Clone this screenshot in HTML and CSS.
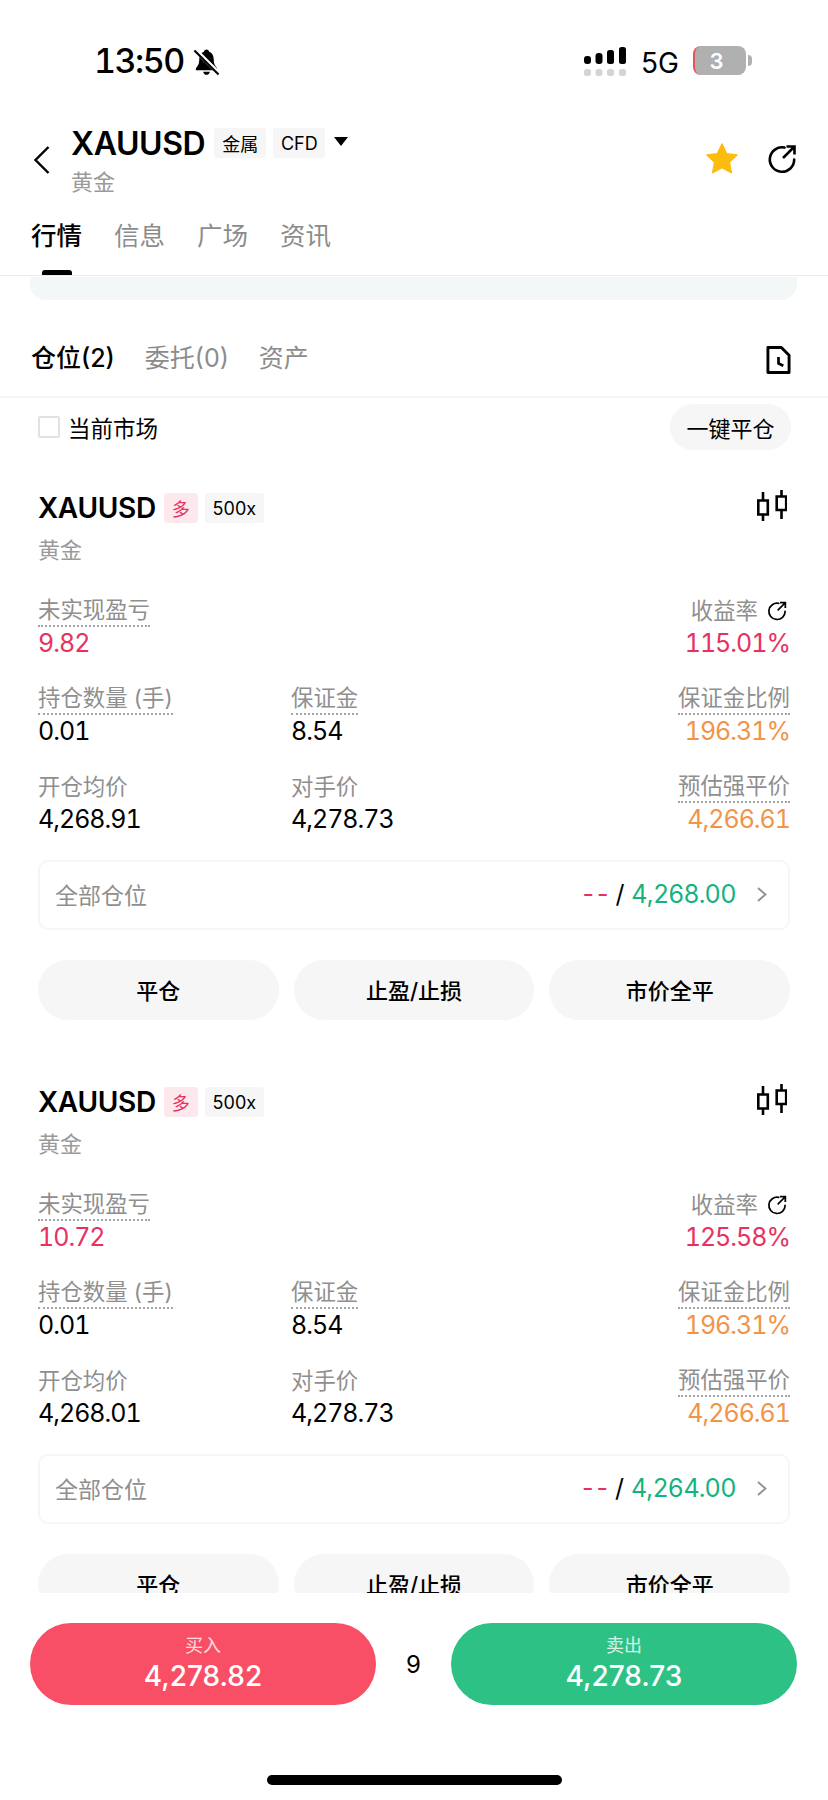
FILE: index.html
```html
<!DOCTYPE html>
<html lang="zh-CN">
<head>
    <meta charset="UTF-8">
    <meta name="viewport" content="width=device-width, initial-scale=1.0">
    <title>XAUUSD 黄金</title>
    <link rel="stylesheet" href="styles.css">
</head>
<body>
    <svg class="defs" width="0" height="0" aria-hidden="true">
        <symbol id="share" viewBox="0 0 30 30">
            <path d="M17.5 3.6A12.2 12.2 0 1 0 27.2 15.5" fill="none" stroke="currentColor" stroke-width="2.6" stroke-linecap="round"/>
            <path d="M16 14 27 3M19.5 2.5h8v8" fill="none" stroke="currentColor" stroke-width="2.6"/>
        </symbol>
        <symbol id="candle" viewBox="0 0 30 32">
            <path d="M6 2v8M6 25v6M24.500 0v6M24.500 20v9" stroke="currentColor" stroke-width="2.600"/>
            <path d="M1.300 10.500h9.500v14H1.300zM19.700 6.500h9.500v13.500h-9.500z" fill="none" stroke="currentColor" stroke-width="2.600"/>
        </symbol>
        <symbol id="chevron" viewBox="0 0 10 15">
            <path d="M1 1l7.500 6.500L1 14" fill="none" stroke="currentColor" stroke-width="1.800"/>
        </symbol>
    </svg>

    <div class="status-bar">
        <div class="status-left">
            <span class="clock">13:50</span>
            <svg class="bell" viewBox="0 0 28 28" width="27" height="28">
                <path d="M14 1c-1.500 0-2.500 1-2.700 2.300C7.800 4.500 6.500 8 6.500 11.500c0 4-1 6.500-3.500 9v2h22v-2c-2.500-2.500-3.500-5-3.500-9C21.500 8 20.200 4.500 16.700 3.300 16.500 2 15.500 1 14 1zM10.500 24c.4 2 1.800 3.300 3.500 3.300s3.100-1.300 3.500-3.300z" fill="#000"/>
                <path d="M3 2l24 24" stroke="#fff" stroke-width="4.500"/>
                <path d="M1.500 2l25 25" stroke="#000" stroke-width="2.200"/>
            </svg>
        </div>
        <div class="status-right">
            <svg class="signal" viewBox="0 0 42 29" width="42" height="29">
                <rect x="0" y="9" width="7" height="8" rx="3" fill="#000"/>
                <rect x="11.500" y="6" width="7" height="11" rx="3" fill="#000"/>
                <rect x="23" y="3" width="7" height="14" rx="2.500" fill="#000"/>
                <rect x="35" y="0" width="7" height="17" rx="2.500" fill="#000"/>
                <rect x="0" y="22" width="7" height="7" rx="2.500" fill="#d4d4d4"/>
                <rect x="11.500" y="22" width="7" height="7" rx="2.500" fill="#d4d4d4"/>
                <rect x="23" y="22" width="7" height="7" rx="2.500" fill="#d4d4d4"/>
                <rect x="35" y="22" width="7" height="7" rx="2.500" fill="#d4d4d4"/>
            </svg>
            <span class="network">5G</span>
            <div class="battery"><span class="battery-level">3</span></div>
        </div>
    </div>

    <header class="nav">
        <svg class="back" viewBox="0 0 18 30" width="18" height="30">
            <path d="M15.500 2 2.500 15l13 13" fill="none" stroke="#000" stroke-width="2.400"/>
        </svg>
        <div class="nav-title">
            <div class="nav-name">
                <span class="symbol-large">XAUUSD</span>
                <span class="tag tag-nav">金属</span>
                <span class="tag tag-nav">CFD</span>
                <span class="caret"></span>
            </div>
            <div class="nav-sub">黄金</div>
        </div>
        <div class="nav-actions">
            <svg class="star" viewBox="0 0 32 31" width="32" height="31">
                <path d="M16 1l4.600 9.700 10.400 1.300-7.700 7.200 2 10.500L16 24.500 6.700 29.700l2-10.500L1 12l10.400-1.300z" fill="#fcbc0d" stroke="#fcbc0d" stroke-width="1.500" stroke-linejoin="round"/>
            </svg>
            <svg class="share-large"><use href="#share"/></svg>
        </div>
    </header>

    <nav class="main-tabs">
        <a class="main-tab active">行情</a>
        <a class="main-tab">信息</a>
        <a class="main-tab">广场</a>
        <a class="main-tab">资讯</a>
    </nav>

    <main class="content">
        <div class="strip"></div>

        <div class="sub-tabs">
            <a class="sub-tab active">仓位(2)</a>
            <a class="sub-tab">委托(0)</a>
            <a class="sub-tab">资产</a>
            <svg class="history" viewBox="0 0 26 30" width="25" height="30">
                <path d="M2 2h14l8 8v18H2z" fill="none" stroke="#000" stroke-width="3" stroke-linejoin="round"/>
                <path d="M13 12v6.500l5 2.500" fill="none" stroke="#000" stroke-width="2.800"/>
            </svg>
        </div>

        <div class="filter-row">
            <label class="market-check"><span class="checkbox"></span>当前市场</label>
            <button class="close-all">一键平仓</button>
        </div>

        <section class="position">
            <div class="position-head">
                <div>
                    <div class="position-name">
                        <span class="symbol">XAUUSD</span>
                        <span class="tag tag-long">多</span>
                        <span class="tag tag-lever">500x</span>
                    </div>
                    <div class="position-sub">黄金</div>
                </div>
                <svg class="candle"><use href="#candle"/></svg>
            </div>
            <div class="stats">
                <div class="stat">
                    <span class="label dotted">未实现盈亏</span>
                    <span class="value red">9.82</span>
                </div>
                <div class="stat"></div>
                <div class="stat stat-right">
                    <span class="label">收益率<svg class="share-small"><use href="#share"/></svg></span>
                    <span class="value red">115.01%</span>
                </div>
                <div class="stat">
                    <span class="label dotted">持仓数量 (手)</span>
                    <span class="value">0.01</span>
                </div>
                <div class="stat">
                    <span class="label dotted">保证金</span>
                    <span class="value">8.54</span>
                </div>
                <div class="stat stat-right">
                    <span class="label dotted">保证金比例</span>
                    <span class="value orange">196.31%</span>
                </div>
                <div class="stat">
                    <span class="label">开仓均价</span>
                    <span class="value">4,268.91</span>
                </div>
                <div class="stat">
                    <span class="label">对手价</span>
                    <span class="value">4,278.73</span>
                </div>
                <div class="stat stat-right">
                    <span class="label dotted">预估强平价</span>
                    <span class="value orange">4,266.61</span>
                </div>
            </div>
            <div class="all-positions">
                <span class="all-label">全部仓位</span>
                <div class="all-values">
                    <span class="red dashes">--</span>
                    <span class="slash">/</span>
                    <span class="green">4,268.00</span>
                    <svg class="chevron"><use href="#chevron"/></svg>
                </div>
            </div>
            <div class="actions">
                <button class="action">平仓</button>
                <button class="action">止盈/止损</button>
                <button class="action">市价全平</button>
            </div>
        </section>

        <section class="position">
            <div class="position-head">
                <div>
                    <div class="position-name">
                        <span class="symbol">XAUUSD</span>
                        <span class="tag tag-long">多</span>
                        <span class="tag tag-lever">500x</span>
                    </div>
                    <div class="position-sub">黄金</div>
                </div>
                <svg class="candle"><use href="#candle"/></svg>
            </div>
            <div class="stats">
                <div class="stat">
                    <span class="label dotted">未实现盈亏</span>
                    <span class="value red">10.72</span>
                </div>
                <div class="stat"></div>
                <div class="stat stat-right">
                    <span class="label">收益率<svg class="share-small"><use href="#share"/></svg></span>
                    <span class="value red">125.58%</span>
                </div>
                <div class="stat">
                    <span class="label dotted">持仓数量 (手)</span>
                    <span class="value">0.01</span>
                </div>
                <div class="stat">
                    <span class="label dotted">保证金</span>
                    <span class="value">8.54</span>
                </div>
                <div class="stat stat-right">
                    <span class="label dotted">保证金比例</span>
                    <span class="value orange">196.31%</span>
                </div>
                <div class="stat">
                    <span class="label">开仓均价</span>
                    <span class="value">4,268.01</span>
                </div>
                <div class="stat">
                    <span class="label">对手价</span>
                    <span class="value">4,278.73</span>
                </div>
                <div class="stat stat-right">
                    <span class="label dotted">预估强平价</span>
                    <span class="value orange">4,266.61</span>
                </div>
            </div>
            <div class="all-positions">
                <span class="all-label">全部仓位</span>
                <div class="all-values">
                    <span class="red dashes">--</span>
                    <span class="slash">/</span>
                    <span class="green">4,264.00</span>
                    <svg class="chevron"><use href="#chevron"/></svg>
                </div>
            </div>
            <div class="actions">
                <button class="action">平仓</button>
                <button class="action">止盈/止损</button>
                <button class="action">市价全平</button>
            </div>
        </section>
    </main>

    <footer class="trade-bar">
        <div class="trade-row">
            <button class="trade buy"><span class="trade-label">买入</span><span class="trade-price">4,278.82</span></button>
            <span class="spread">9</span>
            <button class="trade sell"><span class="trade-label">卖出</span><span class="trade-price">4,278.73</span></button>
        </div>
        <div class="home-indicator"></div>
    </footer>
</body>
</html>
```

FILE: styles.css
```css
* {
    box-sizing: border-box;
}
html, body {
    margin: 0;
    padding: 0;
}
body {
    width: 828px;
    height: 1800px;
    overflow: hidden;
    display: flex;
    flex-direction: column;
    font-family: Inter, "Noto Sans CJK SC", sans-serif;
    background-color: #fff;
    color: #000;
}
button {
    font-family: inherit;
    border: none;
    padding: 0;
}
.defs {
    position: absolute;
}
.red {
    color: #e8315f;
}
.orange {
    color: #f29448;
}
.green {
    color: #14b37d;
}

/* status bar */
.status-bar {
    height: 110px;
    flex: none;
    display: flex;
    justify-content: space-between;
    padding: 46px 0 0 94px;
}
.status-left {
    display: flex;
    align-items: flex-start;
    height: 30px;
    gap: 9px;
}
.clock {
    font-size: 34px;
    font-weight: 500;
    font-variant-numeric: tabular-nums;
    letter-spacing: -1.5px;
    line-height: 30px;
}
.bell {
    margin-top: 2px;
}
.status-right {
    display: flex;
    align-items: flex-start;
    padding-right: 82px;
}
.signal {
    flex: none;
    margin-top: 1px;
}
.network {
    font-size: 28px;
    line-height: 30px;
    margin: 2px 14px 0 15px;
}
.battery {
    position: relative;
    width: 53px;
    height: 29px;
    background-color: #b0b0b0;
    border-left: 2px solid #e0555a;
    border-radius: 8px;
    display: flex;
    align-items: center;
    justify-content: center;
}
.battery::after {
    content: "";
    position: absolute;
    right: -6px;
    top: 9px;
    width: 4px;
    height: 11px;
    border-radius: 0 4px 4px 0;
    background-color: #b0b0b0;
}
.battery-level {
    color: #fff;
    font-size: 22px;
    font-weight: 600;
    margin-right: 8px;
}

/* header */
.nav {
    height: 95px;
    flex: none;
    display: flex;
    padding: 12px 31px 0 33px;
}
.back {
    margin: 23px 20px 0 0;
    flex: none;
}
.nav-name {
    display: flex;
    align-items: center;
    height: 42px;
}
.symbol-large {
    font-size: 32px;
    font-weight: 600;
    letter-spacing: -0.4px;
    margin-right: 9px;
}
.tag {
    display: flex;
    align-items: center;
    justify-content: center;
    height: 30px;
    border-radius: 3px;
    background-color: #f6f6f6;
}
.tag-nav {
    width: 52px;
    font-size: 18px;
    margin-right: 7px;
}
.caret {
    width: 0;
    height: 0;
    margin: 0 0 3px 2px;
    border-left: 7px solid transparent;
    border-right: 7px solid transparent;
    border-top: 9px solid #000;
}
.nav-sub {
    font-size: 22px;
    line-height: 30px;
    color: #9a9a9a;
    margin-top: 3px;
}
.nav-actions {
    margin-left: auto;
    display: flex;
    gap: 29px;
    padding-top: 21px;
}
.share-large {
    width: 30px;
    height: 30px;
    margin-top: 1px;
    color: #000;
}

/* main tabs */
.main-tabs {
    height: 71px;
    flex: none;
    display: flex;
    gap: 32px;
    padding: 13px 0 0 31px;
    border-bottom: 1px solid #e9edf0;
}
.main-tab {
    position: relative;
    font-size: 25.500px;
    line-height: 36px;
    color: #8c8c8c;
}
.main-tab.active {
    color: #000;
    font-weight: 500;
}
.main-tab.active::after {
    content: "";
    position: absolute;
    left: 11px;
    bottom: 0;
    width: 30px;
    height: 5px;
    border-radius: 3px 3px 0 0;
    background-color: #000;
}

/* scrolling area */
.content {
    flex: 1;
    min-height: 0;
    overflow: hidden;
}
.strip {
    height: 23px;
    margin: 1px 31px 0 30px;
    background-color: #f4f7f8;
    border-radius: 0 0 16px 16px;
}
.sub-tabs {
    height: 98px;
    display: flex;
    align-items: center;
    gap: 30px;
    padding: 16px 37px 0 31px;
    border-bottom: 2px solid #f5f5f5;
}
.sub-tab {
    font-size: 25px;
    color: #8c8c8c;
}
.sub-tab.active {
    color: #000;
    font-weight: 500;
}
.history {
    margin-left: auto;
    margin-top: 8px;
}
.filter-row {
    height: 46px;
    margin-top: 6px;
    display: flex;
    align-items: center;
    justify-content: space-between;
    padding: 0 37px 0 38px;
}
.market-check {
    display: flex;
    align-items: center;
    gap: 8px;
    font-size: 22.500px;
    padding-bottom: 1px;
}
.checkbox {
    width: 22px;
    height: 22px;
    border: 2px solid #e2e2e2;
    border-radius: 2px;
}
.close-all {
    width: 121px;
    height: 46px;
    border-radius: 23px;
    background-color: #f6f6f6;
    font-size: 22px;
    color: #000;
}

/* position card */
.position {
    padding: 40px 38px 0;
    height: 594px;
}
.position-head {
    display: flex;
    justify-content: space-between;
}
.position-name {
    display: flex;
    align-items: center;
    height: 36px;
}
.symbol {
    font-size: 28px;
    font-weight: 600;
    letter-spacing: -0.3px;
    margin-right: 8px;
}
.tag-long {
    width: 34px;
    background-color: #fde8ee;
    color: #e8315f;
    font-size: 18px;
    margin-right: 7px;
}
.tag-lever {
    width: 59px;
    font-size: 18px;
}
.position-sub {
    font-size: 22px;
    line-height: 30px;
    color: #9a9a9a;
    margin-top: 9px;
}
.candle {
    width: 30px;
    height: 32px;
    margin-right: 3px;
    color: #000;
}
.stats {
    display: grid;
    grid-template-columns: 253px 1fr auto;
    grid-auto-rows: 65px;
    row-gap: 23px;
    margin-top: 30px;
}
.stat {
    display: flex;
    flex-direction: column;
    align-items: flex-start;
}
.stat-right {
    align-items: flex-end;
}
.label {
    display: flex;
    align-items: center;
    gap: 9px;
    height: 32px;
    font-size: 22.400px;
    line-height: 30px;
    color: #8f8f8f;
}
.dotted {
    border-bottom: 2px dotted #a5a5a5;
}
.value {
    font-size: 25px;
    font-variant-numeric: tabular-nums;
    letter-spacing: -1px;
    line-height: 33px;
}
.share-small {
    width: 20px;
    height: 20px;
    color: #000;
    margin-right: 3px;
}
.all-positions {
    height: 70px;
    margin-top: 24px;
    display: flex;
    align-items: center;
    justify-content: space-between;
    padding: 0 21px 2px 15px;
    border: 2px solid #f6f6f6;
    border-radius: 10px;
}
.all-label {
    font-size: 23px;
    color: #8f8f8f;
}
.all-values {
    display: flex;
    align-items: center;
    gap: 7px;
    font-size: 25px;
    letter-spacing: -0.2px;
}
.dashes {
    letter-spacing: 3px;
    margin-right: -3px;
}
.chevron {
    width: 10px;
    height: 15px;
    color: #8f8f8f;
    margin-left: 14px;
}
.actions {
    display: flex;
    gap: 15px;
    margin-top: 30px;
}
.action {
    flex: 1;
    height: 60px;
    padding-bottom: 3px;
    border-radius: 30px;
    background-color: #f6f6f6;
    font-size: 22px;
    font-weight: 500;
    color: #000;
}

/* buy and sell bar */
.trade-bar {
    height: 207px;
    flex: none;
    background-color: #fff;
    padding: 30px 31px 0 30px;
    position: relative;
}
.trade-row {
    display: flex;
    align-items: center;
}
.trade {
    width: 346px;
    height: 82px;
    border-radius: 41px;
    display: flex;
    flex-direction: column;
    align-items: center;
    justify-content: center;
    color: #fff;
}
.buy {
    background-color: #f84f66;
}
.sell {
    background-color: #2ec186;
}
.trade-label {
    font-size: 18px;
    line-height: 24px;
    opacity: 0.8;
}
.trade-price {
    font-size: 28px;
    font-weight: 500;
    line-height: 36px;
}
.spread {
    flex: 1;
    text-align: center;
    font-size: 24px;
}
.home-indicator {
    position: absolute;
    left: 267px;
    bottom: 15px;
    width: 295px;
    height: 10px;
    border-radius: 5px;
    background-color: #000;
}
```
